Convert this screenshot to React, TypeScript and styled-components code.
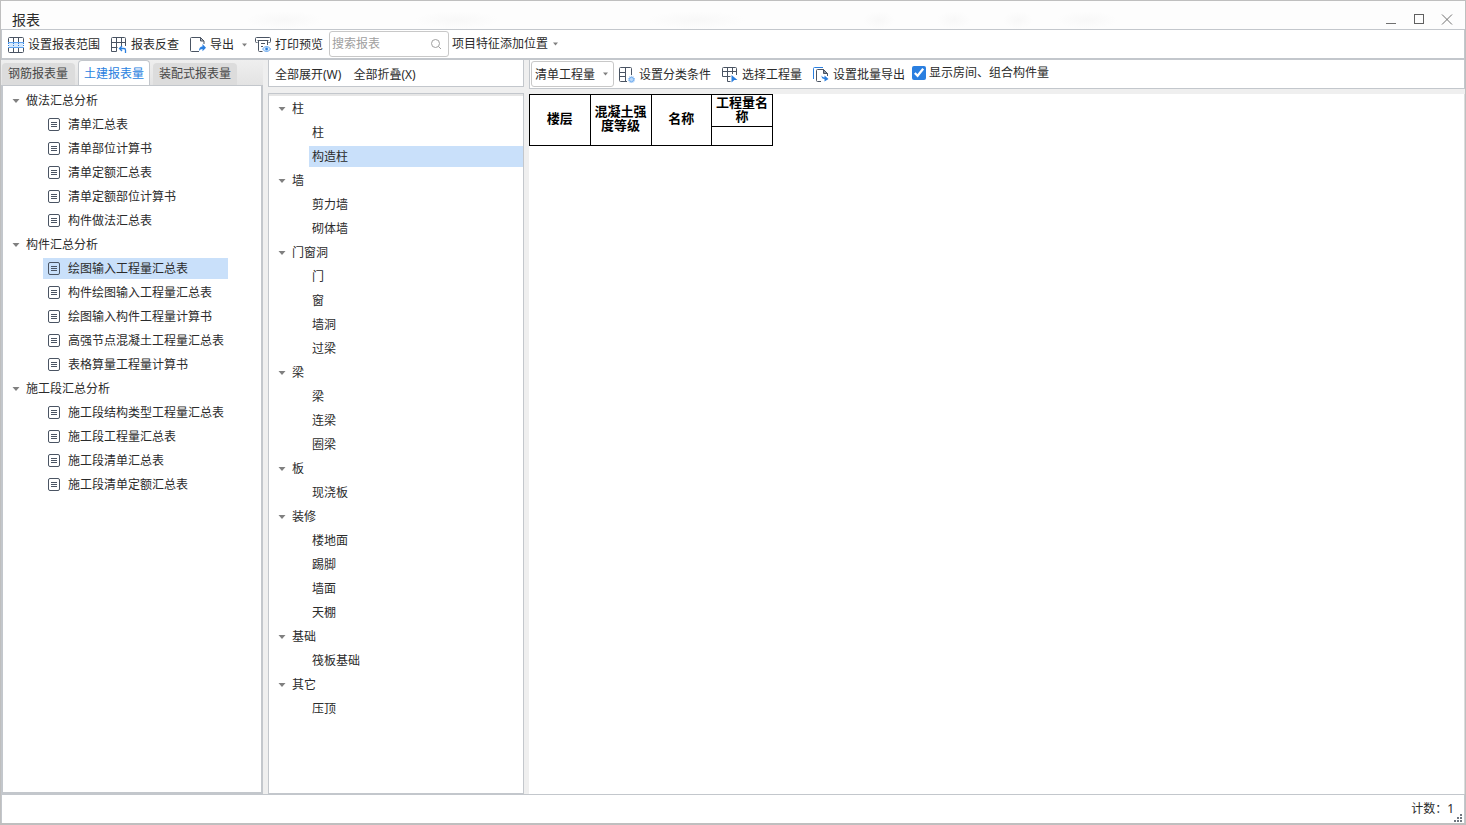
import React from "react";
import styled, { createGlobalStyle } from "styled-components";

const line = "#c3c7cc";
const ink = "#4a5463";
const blue = "#2a7fe0";

const GlobalStyle = createGlobalStyle`
  * { box-sizing: border-box; }
  body {
    margin: 0;
    background: #fff;
    color: #2b2b2b;
    font: 12px/16px "Noto Sans", "Noto Sans CJK SC", sans-serif;
  }
  button, input, select { font: inherit; color: inherit; }
  ul { list-style: none; margin: 0; padding: 0; }
`;

const Window = styled.div`
  display: flex;
  flex-direction: column;
  min-height: 100vh;
  border: 1px solid #bfbfbf;
  border-bottom-width: 2px;
`;

const TitleBar = styled.header`
  display: flex;
  align-items: flex-end;
  justify-content: space-between;
  height: 28px;
  padding: 0 12px 0 11px;
  background:
    radial-gradient(closest-side, #f8f8f8, #fdfdfd) 245px 10px / 76px 18px no-repeat,
    radial-gradient(closest-side, #f8f8f8, #fdfdfd) 414px 10px / 84px 18px no-repeat,
    radial-gradient(closest-side, #f8f8f8, #fdfdfd) 646px 10px / 98px 18px no-repeat,
    radial-gradient(closest-side, #f8f8f8, #fdfdfd) 862px 10px / 32px 18px no-repeat,
    radial-gradient(closest-side, #f8f8f8, #fdfdfd) 936px 10px / 34px 18px no-repeat,
    radial-gradient(closest-side, #f8f8f8, #fdfdfd) 1002px 10px / 30px 18px no-repeat,
    radial-gradient(closest-side, #f8f8f8, #fdfdfd) 1056px 10px / 60px 18px no-repeat,
    #fdfdfd;
`;

const Title = styled.h1`
  margin: 0;
  font-size: 14px;
  font-weight: 400;
  line-height: 18px;
`;

const WindowButtons = styled.div`
  display: flex;
  gap: 16px;
  padding-bottom: 3px;
`;

const PlainButton = styled.button`
  display: flex;
  align-items: center;
  padding: 0;
  border: 0;
  background: none;
  white-space: nowrap;
`;

const ToolBar = styled.div`
  display: flex;
  align-items: center;
  height: 31px;
  padding-left: 6px;
  border: 1px solid ${line};
  border-bottom-width: 2px;
  background: #fff;
`;

const ToolGroup = styled.div<{ $gap: number }>`
  display: flex;
  align-items: center;
  gap: ${(p) => p.$gap}px;
`;

const ToolButton = styled(PlainButton)`
  gap: 4px;
  height: 24px;
  padding-top: 2px;
`;

const MenuButton = styled(PlainButton)`
  gap: 5px;
  height: 24px;
`;

const SearchBox = styled.label`
  display: flex;
  align-items: center;
  width: 120px;
  height: 26px;
  margin: 0 3px 0 6px;
  padding: 0 6px 0 2px;
  border: 1px solid #c8c8c8;
  border-radius: 3px;
`;

const SearchInput = styled.input`
  flex: 1;
  min-width: 0;
  padding: 0;
  border: 0;
  outline: 0;
  background: none;
  &::placeholder { color: #a0a0a0; opacity: 1; }
`;

const Main = styled.main`
  display: flex;
  flex: 1;
  gap: 5px;
  background: #efefef;
`;

const Column = styled.section<{ $width: number }>`
  display: flex;
  flex-direction: column;
  flex: 0 0 ${(p) => p.$width}px;
`;

const ReportColumn = styled.section`
  display: flex;
  flex-direction: column;
  flex: 1;
  min-width: 0;
`;

const TabBar = styled.div`
  display: flex;
  align-items: flex-end;
  gap: 3px;
  height: 25px;
  padding-left: 1px;
  background: linear-gradient(#efefef, #e3e3e3);
`;

const Tab = styled.button<{ $active?: boolean; $wide?: boolean }>`
  height: ${(p) => (p.$active ? 25 : 22)}px;
  width: ${(p) => (p.$wide ? 84 : p.$active ? 72 : 73)}px;
  padding: ${(p) => (p.$active ? "1px 5px 0" : "0 6px")};
  border: ${(p) => (p.$active ? `1px solid ${line}` : "0")};
  border-bottom: 0;
  border-radius: 4px 4px 0 0;
  background: ${(p) => (p.$active ? "#fff" : "#dcdcdc")};
  color: ${(p) => (p.$active ? blue : "#484848")};
  text-align: left;
  white-space: nowrap;
`;

const NavPanel = styled.nav`
  flex: 1;
  padding-top: 2px;
  border: 2px solid ${line};
  border-top-width: 1px;
  background: #fff;
`;

const ComponentPanel = styled.nav`
  flex: 1;
  margin-top: 6px;
  padding-top: 2px;
  border: 1px solid ${line};
  background: #fff;
  box-shadow: inset 0 2px #e6e6e6;
`;

const ExpandBar = styled.div`
  display: flex;
  align-items: center;
  gap: 12px;
  height: 27px;
  padding: 4px 6px 0;
  border: 1px solid ${line};
  border-top: 0;
  background: #fff;
`;

const GroupButton = styled(PlainButton)`
  gap: 6px;
  height: 24px;
  padding: 2px 0 0 9px;
`;

const NavItem = styled.button<{ $selected: boolean }>`
  display: flex;
  align-items: center;
  gap: 8px;
  width: 185px;
  height: 21px;
  margin: 2px 0 1px 40px;
  padding: 0 0 0 5px;
  border: 0;
  background: ${(p) => (p.$selected ? "#c9e0fa" : "transparent")};
  white-space: nowrap;
`;

const ComponentItem = styled.button<{ $selected: boolean }>`
  display: block;
  width: calc(100% - 40px);
  height: 21px;
  margin: 2px 0 1px 40px;
  padding: 0 3px;
  border: 0;
  background: ${(p) => (p.$selected ? "#c9e0fa" : "transparent")};
  text-align: left;
`;

const ItemRow = styled.li`
  height: 24px;
  overflow: hidden;
`;

const ReportBar = styled.div`
  display: flex;
  align-items: center;
  height: 29px;
  padding-left: 1px;
  border: 1px solid ${line};
  border-top: 0;
  background: #fff;
`;

const SelectBox = styled.div`
  display: grid;
  align-items: center;
  width: 83px;
  height: 26px;
  margin-right: 5px;
  border: 1px solid #c8c8c8;
  border-radius: 3px;
  > * { grid-area: 1 / 1; }
  > svg { justify-self: end; margin-right: 5px; pointer-events: none; }
`;

const Select = styled.select`
  appearance: none;
  width: 100%;
  height: 24px;
  padding: 1px 3px 0;
  border: 0;
  background: none;
`;

const CheckLabel = styled.label`
  display: flex;
  align-items: center;
  gap: 3px;
  margin-left: 7px;
  padding-bottom: 2px;
  white-space: nowrap;
`;

const CheckBox = styled.input`
  width: 14px;
  height: 14px;
  margin: 0;
  accent-color: ${blue};
`;

const Sheet = styled.div`
  flex: 1;
  margin-top: 5px;
  border-right: 1px solid #dcdcdc;
  background: #fff;
`;

const ReportTable = styled.table`
  width: 244px;
  table-layout: fixed;
  border-collapse: collapse;
  color: #000;
  font: 700 13px/14px "Noto Sans CJK SC", sans-serif;
`;

const Head = styled.th`
  padding: 0 2px 4px;
  border: 1px solid #000;
`;

const HeadTop = styled(Head)`
  height: 32px;
  padding: 0 2px 3px;
`;

const Cell = styled.td`
  height: 19px;
  padding: 0;
  border: 1px solid #000;
`;

const StatusBar = styled.footer`
  display: flex;
  align-items: center;
  justify-content: flex-end;
  height: 29px;
  border: 1px solid ${line};
  border-bottom: 0;
  background: #fff;
`;

const Grip = styled.svg`
  align-self: flex-end;
  margin: 0 2px 1px 0;
`;

const Caret = ({ wide = false }: { wide?: boolean }) =>
  wide ? (
    <svg width="8" height="6" viewBox="0 0 8 6" aria-hidden="true">
      <path d="M0.5 1h7L4 5z" fill="#808080" />
    </svg>
  ) : (
    <svg width="5" height="4" viewBox="0 0 5 4" aria-hidden="true">
      <path d="M0 0.5h5L2.5 3.5z" fill="#808080" />
    </svg>
  );

const Icon = ({ children }: { children: React.ReactNode }) => (
  <svg width="16" height="16" viewBox="0 0 16 16" fill="none" stroke={ink} aria-hidden="true">
    {children}
  </svg>
);

const RangeIcon = () => (
  <Icon>
    <path d="M0.5 5V1.5a1 1 0 0 1 1-1h13a1 1 0 0 1 1 1V5M5.5 0.5V5M10.5 0.5V5M0.5 11v3.5a1 1 0 0 0 1 1h13a1 1 0 0 0 1-1V11M5.5 11v4.5M10.5 11v4.5" />
    <path d="M1 6h14v4H1z" fill="#d5e8fc" stroke="none" />
    <path d="M0 5.5h16M0 10.5h16" stroke="#5fa3ee" />
    <path d="M0.5 6v4M5.5 6v4M10.5 6v4M15.5 6v4" stroke={blue} strokeDasharray="1 1" />
  </Icon>
);

const TraceIcon = () => (
  <Icon>
    <path d="M14.5 9V1.5a1 1 0 0 0-1-1h-12a1 1 0 0 0-1 1v13h5M0.5 5.5h14M0.5 10.5h6M5.5 0.5v14M10.5 0.5V9" />
    <path d="M14.5 16v-3a1.500 1.500 0 0 0-1.500-1.500H8.500M11 9l-2.500 2.500L11 14" stroke={blue} strokeWidth="1.3" />
  </Icon>
);

const ExportIcon = () => (
  <Icon>
    <path d="M9 14.500H1.500a1 1 0 0 1-1-1v-12a1 1 0 0 1 1-1h9l3.500 3.500V7" />
    <path d="M10.500 0.500v3.500h3.500z" fill="#aeb5bf" />
    <path d="M9 14q0-4.500 3.500-4.500V7L16 10.700l-3.500 3.500v-2.300q-2.300 0-3.500 2.100z" fill={blue} stroke="none" />
  </Icon>
);

const PrintIcon = () => (
  <Icon>
    <path d="M2.500 5.500h-1a1 1 0 0 1-1-1v-3a1 1 0 0 1 1-1h13a1 1 0 0 1 1 1v3a1 1 0 0 1-1 1h-1M2.500 3.500h11M3.500 3.500v10a1 1 0 0 0 1 1H7.500M12.500 3.500V8M6 6.500h4M6 9.500h2" />
    <path d="M7.500 12q4-5 8.200 0q-4.200 5-8.200 0z" fill="#e0effd" stroke="#5fa3ee" />
    <circle cx="11.600" cy="12" r="1.400" fill={blue} stroke="none" />
  </Icon>
);

const ClassifyIcon = () => (
  <Icon>
    <path d="M12.500 8V1.500a1 1 0 0 0-1-1h-10a1 1 0 0 0-1 1v12a1 1 0 0 0 1 1H8M6.500 0.500v14M0.500 5.500h6M0.500 9.500h6" />
    <circle cx="12.500" cy="12.500" r="2.200" fill="#b9d8fa" stroke="#6dabf0" />
    <circle cx="12.500" cy="12.500" r="3.200" stroke="#6dabf0" strokeDasharray="1 1" />
  </Icon>
);

const PickIcon = () => (
  <Icon>
    <path d="M14.500 8V1.500a1 1 0 0 0-1-1h-12a1 1 0 0 0-1 1v8h8M0.500 4.500h14M5.500 0.500v14M10.500 0.500V7M5.500 14.500H8.500" />
    <path d="M9.500 8l6 5h-3.200l-2.800 2.500z" fill={blue} stroke="none" />
  </Icon>
);

const BatchIcon = () => (
  <Icon>
    <path d="M0.500 12V1.500a1 1 0 0 1 1-1H10" stroke={blue} />
    <path d="M8 14.500H4.500a1 1 0 0 1-1-1v-10a1 1 0 0 1 1-1h6l4 4V9" />
    <path d="M10.500 2.500v4h4z" fill="#8b94a1" />
    <path d="M8.500 8.500q0 3.500 3 3.500v2.500L15.500 12l-4-3.500v2q-2 0-3-2z" fill={blue} stroke="none" />
  </Icon>
);

const SheetIcon = () => (
  <svg width="12" height="13" viewBox="0 0 12 13" fill="none" stroke={ink} aria-hidden="true">
    <rect x="0.5" y="0.5" width="11" height="12" rx="1.5" />
    <path d="M3 4.500h6M3 6.500h6M3 8.500h6" />
  </svg>
);

const SearchIcon = () => (
  <svg width="12" height="12" viewBox="0 0 12 12" fill="none" stroke="#a0a0a0" aria-hidden="true">
    <circle cx="5.500" cy="5.500" r="4" />
    <path d="M8.500 8.500l2.500 2.500" />
  </svg>
);

const reports = [
  { name: "做法汇总分析", items: ["清单汇总表", "清单部位计算书", "清单定额汇总表", "清单定额部位计算书", "构件做法汇总表"] },
  { name: "构件汇总分析", items: ["绘图输入工程量汇总表", "构件绘图输入工程量汇总表", "绘图输入构件工程量计算书", "高强节点混凝土工程量汇总表", "表格算量工程量计算书"] },
  { name: "施工段汇总分析", items: ["施工段结构类型工程量汇总表", "施工段工程量汇总表", "施工段清单汇总表", "施工段清单定额汇总表"] },
];

const components = [
  { name: "柱", items: ["柱", "构造柱"] },
  { name: "墙", items: ["剪力墙", "砌体墙"] },
  { name: "门窗洞", items: ["门", "窗", "墙洞", "过梁"] },
  { name: "梁", items: ["梁", "连梁", "圈梁"] },
  { name: "板", items: ["现浇板"] },
  { name: "装修", items: ["楼地面", "踢脚", "墙面", "天棚"] },
  { name: "基础", items: ["筏板基础"] },
  { name: "其它", items: ["压顶"] },
];

export default function App() {
  const [report, setReport] = React.useState("绘图输入工程量汇总表");
  const [component, setComponent] = React.useState("构造柱");

  return (
    <>
      <GlobalStyle />
      <Window>
        <TitleBar>
          <Title>报表</Title>
          <WindowButtons>
            <PlainButton aria-label="最小化">
              <svg width="12" height="12" viewBox="0 0 12 12" stroke="#707070"><path d="M1 9.500h10" /></svg>
            </PlainButton>
            <PlainButton aria-label="最大化">
              <svg width="12" height="12" viewBox="0 0 12 12" fill="none" stroke="#606060"><rect x="1.500" y="0.500" width="9" height="9" /></svg>
            </PlainButton>
            <PlainButton aria-label="关闭">
              <svg width="12" height="12" viewBox="0 0 12 12" stroke="#707070"><path d="M1 0.500l10 10M11 0.500l-10 10" /></svg>
            </PlainButton>
          </WindowButtons>
        </TitleBar>

        <ToolBar>
          <ToolGroup $gap={11}>
            <ToolButton><RangeIcon />设置报表范围</ToolButton>
            <ToolButton><TraceIcon />报表反查</ToolButton>
            <ToolGroup $gap={8}>
              <ToolButton><ExportIcon />导出</ToolButton>
              <ToolButton aria-label="导出选项"><Caret /></ToolButton>
              <ToolButton><PrintIcon />打印预览</ToolButton>
            </ToolGroup>
          </ToolGroup>
          <SearchBox>
            <SearchInput type="text" aria-label="搜索报表" placeholder="搜索报表" />
            <SearchIcon />
          </SearchBox>
          <MenuButton>项目特征添加位置<Caret /></MenuButton>
        </ToolBar>

        <Main>
          <Column $width={262}>
            <TabBar role="tablist">
              <Tab role="tab" aria-selected={false}>钢筋报表量</Tab>
              <Tab role="tab" aria-selected $active>土建报表量</Tab>
              <Tab role="tab" aria-selected={false} $wide>装配式报表量</Tab>
            </TabBar>
            <NavPanel>
              <ul>
                {reports.map((group) => (
                  <li key={group.name}>
                    <GroupButton><Caret wide />{group.name}</GroupButton>
                    <ul>
                      {group.items.map((item) => (
                        <ItemRow key={item}>
                          <NavItem $selected={item === report} onClick={() => setReport(item)}>
                            <SheetIcon />{item}
                          </NavItem>
                        </ItemRow>
                      ))}
                    </ul>
                  </li>
                ))}
              </ul>
            </NavPanel>
          </Column>

          <Column $width={256}>
            <ExpandBar>
              <PlainButton>全部展开(W)</PlainButton>
              <PlainButton>全部折叠(X)</PlainButton>
            </ExpandBar>
            <ComponentPanel>
              <ul>
                {components.map((group) => (
                  <li key={group.name}>
                    <GroupButton><Caret wide />{group.name}</GroupButton>
                    <ul>
                      {group.items.map((item) => (
                        <ItemRow key={item}>
                          <ComponentItem $selected={item === component} onClick={() => setComponent(item)}>
                            {item}
                          </ComponentItem>
                        </ItemRow>
                      ))}
                    </ul>
                  </li>
                ))}
              </ul>
            </ComponentPanel>
          </Column>

          <ReportColumn>
            <ReportBar>
              <SelectBox>
                <Select aria-label="工程量类型" defaultValue="清单工程量">
                  <option>清单工程量</option>
                </Select>
                <Caret />
              </SelectBox>
              <ToolGroup $gap={11}>
                <ToolButton><ClassifyIcon />设置分类条件</ToolButton>
                <ToolButton><PickIcon />选择工程量</ToolButton>
                <ToolButton><BatchIcon />设置批量导出</ToolButton>
              </ToolGroup>
              <CheckLabel>
                <CheckBox type="checkbox" defaultChecked />
                显示房间、组合构件量
              </CheckLabel>
            </ReportBar>
            <Sheet>
              <ReportTable>
                <thead>
                  <tr>
                    <Head rowSpan={2}>楼层</Head>
                    <Head rowSpan={2}>混凝土强度等级</Head>
                    <Head rowSpan={2}>名称</Head>
                    <HeadTop>工程量名称</HeadTop>
                  </tr>
                  <tr><Cell /></tr>
                </thead>
              </ReportTable>
            </Sheet>
          </ReportColumn>
        </Main>

        <StatusBar>
          <span>计数：1</span>
          <Grip width="8" height="8" viewBox="0 0 8 8" fill="#707780" aria-hidden="true">
            <path d="M6 0h2v2H6zM3 3h2v2H3zM6 3h2v2H6zM0 6h2v2H0zM3 6h2v2H3zM6 6h2v2H6z" />
          </Grip>
        </StatusBar>
      </Window>
    </>
  );
}
